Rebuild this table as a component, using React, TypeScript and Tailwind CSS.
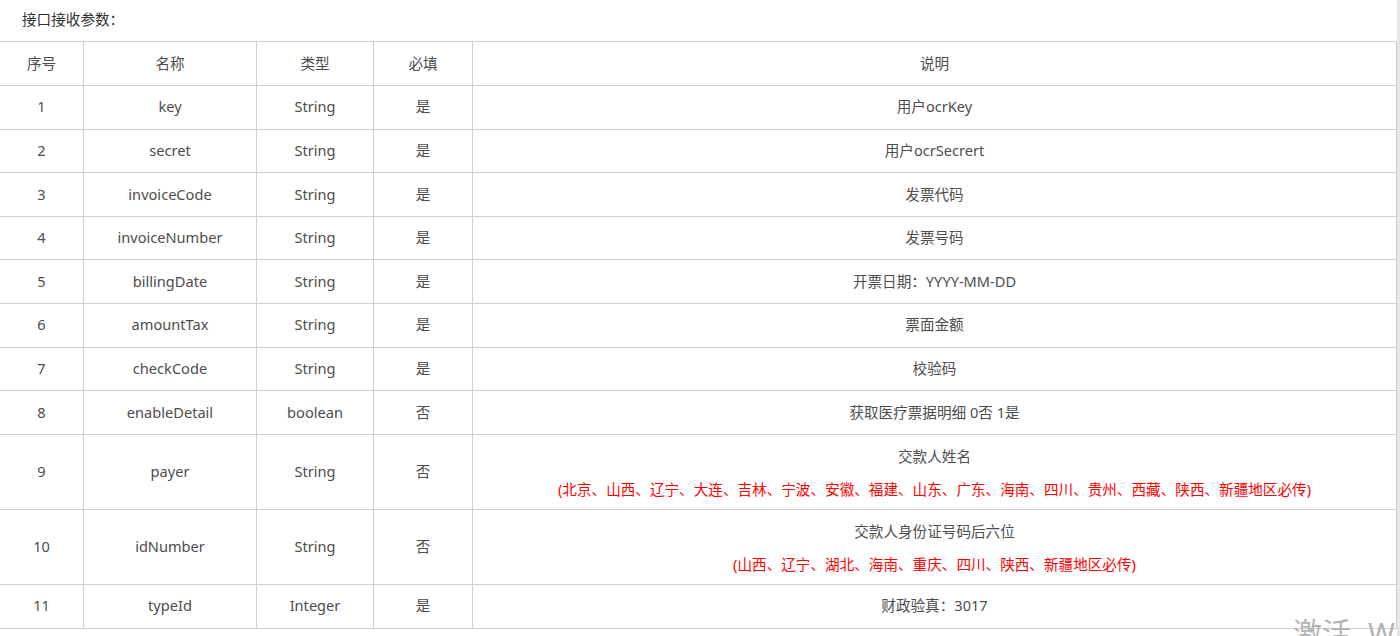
const rows = [
  { no: "1", name: "key", type: "String", req: "是", desc: "用户ocrKey" },
  { no: "2", name: "secret", type: "String", req: "是", desc: "用户ocrSecrert" },
  { no: "3", name: "invoiceCode", type: "String", req: "是", desc: "发票代码" },
  { no: "4", name: "invoiceNumber", type: "String", req: "是", desc: "发票号码" },
  { no: "5", name: "billingDate", type: "String", req: "是", desc: "开票日期：YYYY-MM-DD" },
  { no: "6", name: "amountTax", type: "String", req: "是", desc: "票面金额" },
  { no: "7", name: "checkCode", type: "String", req: "是", desc: "校验码" },
  { no: "8", name: "enableDetail", type: "boolean", req: "否", desc: "获取医疗票据明细 0否 1是" },
  {
    no: "9",
    name: "payer",
    type: "String",
    req: "否",
    desc: "交款人姓名",
    note: "(北京、山西、辽宁、大连、吉林、宁波、安徽、福建、山东、广东、海南、四川、贵州、西藏、陕西、新疆地区必传)",
  },
  {
    no: "10",
    name: "idNumber",
    type: "String",
    req: "否",
    desc: "交款人身份证号码后六位",
    note: "(山西、辽宁、湖北、海南、重庆、四川、陕西、新疆地区必传)",
  },
  { no: "11", name: "typeId", type: "Integer", req: "是", desc: "财政验真：3017" },
];

const cols = "grid grid-cols-[84px_173px_117px_99px_924px]";
const cell = "flex items-center justify-center border-r border-b border-[#cfcfcf]";

export default function App() {
  return (
    <div
      className="relative h-[636px] w-[1400px] overflow-hidden bg-white text-[14.6px] text-[#4d4d4d]"
      style={{ fontFamily: '"Noto Sans", "Noto Sans CJK SC", sans-serif' }}
    >
      <div className="flex">
        <div className="w-[1397px]">
          <div className="flex h-[41px] items-center pb-[1px] pl-[22px] text-[#333]">接口接收参数：</div>
          <div className="border-t border-[#cfcfcf]">
            <div className={`${cols} h-[44px]`}>
              <div className={cell}>序号</div>
              <div className={cell}>名称</div>
              <div className={cell}>类型</div>
              <div className={cell}>必填</div>
              <div className={cell}>说明</div>
            </div>
            {rows.map((r) => {
              const h = r.note ? "h-[75px]" : r.no === "11" ? "h-[44px]" : "h-[43.6px]";
              return (
                <div key={r.no} className={`${cols} ${h}`}>
                  <div className={cell}>{r.no}</div>
                  <div className={cell}>{r.name}</div>
                  <div className={cell}>{r.type}</div>
                  <div className={cell}>{r.req}</div>
                  {r.note ? (
                    <div className={`${cell} flex-col gap-[13px] pt-[2px]`}>
                      <div className="leading-[20px]">{r.desc}</div>
                      <div className="leading-[20px] text-[#ff0000]">{r.note}</div>
                    </div>
                  ) : (
                    <div className={cell}>{r.desc}</div>
                  )}
                </div>
              );
            })}
          </div>
        </div>
        <div className="relative z-10 h-[636px] w-[3px] bg-[#e6e6e6]" />
      </div>
      {/* windows activation watermark peeking in at the bottom edge */}
      <div className="absolute left-[1293px] top-[616px] whitespace-nowrap text-[29px] leading-[34px] text-[#b3b3b3]">
        激活<span className="ml-[17px]">Windows</span>
      </div>
    </div>
  );
}
